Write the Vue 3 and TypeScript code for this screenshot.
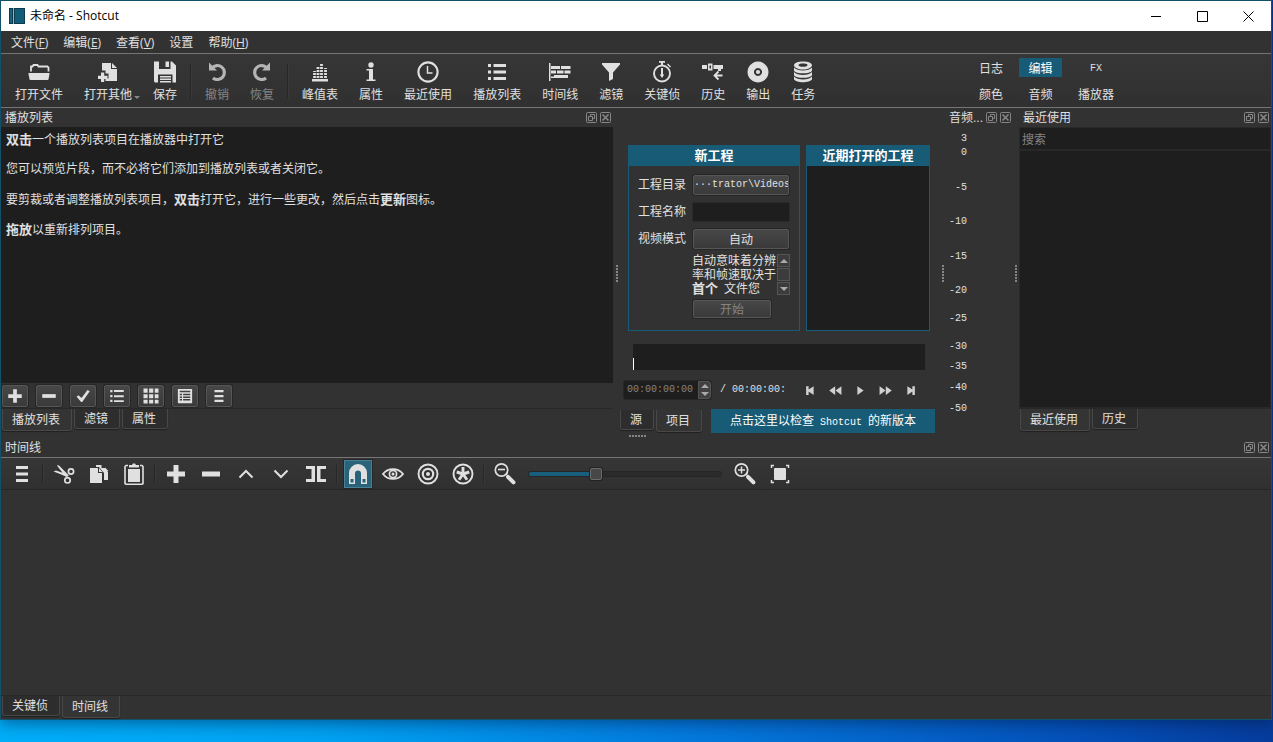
<script setup lang="ts">
import { ref } from 'vue'

interface Tool {
  id: string
  label: string
  disabled?: boolean
  menu?: boolean
  divider?: boolean
}

interface TimelineTool {
  icon: string
  title: string
  active?: boolean
  divider?: boolean
}

const icons: Record<string, string> = {
  open: '<path d="M4 11.500V6.500h1.500l1-1.500h4l1 1.500h9l1 1v4" fill="none" stroke="currentColor" stroke-width="1.800"/><path d="M1.500 13h21v1l-1 5.500-1 .5h-17l-1-.5-1-5.500z"/>',
  other: '<path d="M6 3h9v6h6v12H9.500v-2.500h3v-5h-3v-3H6z"/><path d="M16 3l5 5h-5z"/><path d="M5 12.500h3.200v3.300h3.300V19H8.200v3H5v-3H2v-3.200h3z"/>',
  save: '<path d="M1 1.500h5V9h11.500V1.500H19l4 4v17h-3.500v-8H5v8H2L1 21.500z"/><path d="M12.500 1.500h3.500V7h-3.500zM7 16h11v1.500H7zM7 18.500h11V20H7zM7 21h11v1.500H7z"/>',
  undo: '<path d="M8 18A7 7 0 1 0 7 8" fill="none" stroke="currentColor" stroke-width="3.200"/><path d="M4 2.500v8h8z"/>',
  redo: '<path d="M16 18A7 7 0 1 1 17 8" fill="none" stroke="currentColor" stroke-width="3.200"/><path d="M20 2.500v8h-8z"/>',
  peaks: '<path d="M4 19h16v2.500H4z"/><path d="M6.500 18v-7M10 18V6M13.500 18V3M17.500 18V8" fill="none" stroke="currentColor" stroke-width="2.800" stroke-dasharray="2 1"/>',
  info: '<circle cx="12" cy="5" r="2.700"/><path d="M7.500 9h6.500v10.500h2.500V21h-9v-1.500H10V10.500H7.500z"/>',
  clock: '<circle cx="12" cy="12" r="9.600" fill="none" stroke="currentColor" stroke-width="2.100"/><path d="M11.500 6v7h5" fill="none" stroke="currentColor" stroke-width="1.500"/>',
  list: '<path d="M3 4h3v3H3zM8.500 4H21v3H8.500zM3 10.500h3v3H3zM8.500 10.500H21v3H8.500zM3 17h3v3H3zM8.500 17H21v3H8.500z"/>',
  timeline: '<path d="M1 3h1.500v18H1zM3 6h9v3H3zM13 6h9.500v3H13zM3 10.500h5v3H3zM9 10.500h6.500v3H9zM16.500 10.500h6v3h-6zM6 15h14v3H3v-1.500h3z"/>',
  filter: '<path d="M3 3h18v1.500l-7 8V19l-4 2v-8.500l-7-8z"/>',
  stopwatch: '<circle cx="12" cy="13.500" r="8" fill="none" stroke="currentColor" stroke-width="1.900"/><path d="M9 1h6v1.800H9zM11 2h2v3h-2zM18 3.500l3 3-1 1-3-3zM11 8h2v6l1 1-2 3-2-3 1-1z"/>',
  history: '<path d="M1 5h5v4H1zM7 3.500h4.500v7H7zm1.500 2v3H10v-3zM12.500 5H22v4h-9.500zM17 8.500h3V11h-3z"/><path d="M21.500 15.500H14m3.500-4L13.500 15.500l4 4" fill="none" stroke="currentColor" stroke-width="1.800"/>',
  disc: '<path fill-rule="evenodd" d="M12 1.500a10.500 10.500 0 1 0 .01 0zM12 8a4 4 0 1 1-.01 0z"/><circle cx="12" cy="12" r="2.100"/>',
  jobs: '<path fill-rule="evenodd" d="M12 1.500c5 0 9 1.500 9 3.700S17 9.500 12 9.500 3 7.500 3 5.200s4-3.700 9-3.700zm0 2c-3 0-4.500.6-4.500 1.500S9 6.800 12 6.800 16.500 6 16.500 5 15 3.500 12 3.500z"/><path d="M3 7.500c3 4 15 4 18 0v3.200c-2 3.500-16 3.500-18 0zM3 12c3 4 15 4 18 0v3.200c-2 3.500-16 3.500-18 0zM3 16.500c3 4 15 4 18 0v2.700c-2 4-16 4-18 0z"/>',
  menu: '<path d="M6 4h12v3H6zM6 10.500h12v3H6zM6 17h12v3H6z"/>',
  cut: '<path d="M1.500 9.500L4 8.500l13 4.500-2 2L8 12zM5 3l2 .5 9 9-2 2.500L6 5z"/><circle cx="19" cy="9.500" r="2.600" fill="none" stroke="currentColor" stroke-width="1.700"/><circle cx="15.500" cy="18.300" r="2.700" fill="none" stroke="currentColor" stroke-width="1.700"/>',
  copy: '<path d="M3 6h8v5h4v10H3z"/><path d="M12 6l3.500 4H12zM9 3h5.500v3H18l3 4v8h-4v-7l-5-6H9zM18 5.500l3.500 3.500H18z"/>',
  paste: '<path d="M6 7h12v13H6z"/><path d="M6 3.500H4l-1 1v17l1 .8h16l1-.8v-17l-1-1h-2" fill="none" stroke="currentColor" stroke-width="1.600"/><path d="M7 3h3l1-1.500h2L14 3h3v2.500H7z"/>',
  plus: '<path d="M9.500 3h5v6.500H21v5h-6.500V21h-5v-6.500H3v-5h6.500z"/>',
  minus: '<path d="M3 9.500h18v5H3z"/>',
  up: '<path d="M5.500 15.500L12 9l6.500 6.500" fill="none" stroke="currentColor" stroke-width="2"/>',
  down: '<path d="M5.500 8.500L12 15l6.500-6.500" fill="none" stroke="currentColor" stroke-width="2"/>',
  split: '<path d="M2 4h9v16H2v-3h5.500V7H2zM13 4h9v3h-5.500v10H22v3h-9z"/>',
  magnet: '<path fill-rule="evenodd" d="M3 22V11a9 9 0 0 1 18 0v11h-6V11.500a3 3 0 0 0-6 0V22zm1.500-5v3.500h3V17zm12 0v3.500h3V17z"/>',
  eye: '<path d="M2 12c5-6.500 15-6.500 20 0-5 6.500-15 6.500-20 0z" fill="none" stroke="currentColor" stroke-width="1.900"/><circle cx="12" cy="12" r="3.600" fill="none" stroke="currentColor" stroke-width="1.700"/><circle cx="12" cy="12" r="1.500"/>',
  target: '<circle cx="12" cy="12" r="9.500" fill="none" stroke="currentColor" stroke-width="1.900"/><circle cx="12" cy="12" r="5.200" fill="none" stroke="currentColor" stroke-width="2.200"/><circle cx="12" cy="12" r="2"/>',
  ripple: '<circle cx="12" cy="12" r="9.500" fill="none" stroke="currentColor" stroke-width="1.900"/><path d="M12 12V5M12 12l6.300-2M12 12l4 5.800M12 12l-4 5.800M12 12L5.700 10" stroke="currentColor" stroke-width="2.900"/>',
  zoomout: '<circle cx="8.500" cy="8" r="6.200" fill="none" stroke="currentColor" stroke-width="1.700"/><path d="M5 7.500h7" stroke="currentColor" stroke-width="1.600"/><path d="M12.500 13l2-1.500" stroke="currentColor" stroke-width="1.500"/><path d="M15 14.800l5.500 5.500" stroke="currentColor" stroke-width="4" stroke-linecap="round"/>',
  zoomin: '<circle cx="8.500" cy="8" r="6.200" fill="none" stroke="currentColor" stroke-width="1.700"/><path d="M5 8h7M8.500 4.500v7" stroke="currentColor" stroke-width="1.500"/><path d="M12.500 13l2-1.500" stroke="currentColor" stroke-width="1.500"/><path d="M15 14.800l5.500 5.500" stroke="currentColor" stroke-width="4" stroke-linecap="round"/>',
  fit: '<rect x="6" y="6" width="12" height="12" rx="1"/><path d="M3.500 6V3.500H6M18 3.500h2.500V6M20.500 18v2.500H18M6 20.500H3.500V18" fill="none" stroke="currentColor" stroke-width="1.500"/>',
  check: '<path d="M3.500 13l2.500-2 4 3.500L18 4l3 1.500L11 20H9.500z"/>',
  bullets: '<path d="M3 4h3v3H3zM8 4h13v2.500H8zM3 10.500h3v3H3zM8 11h13v2.500H8zM3 17h3v3H3zM8 17.500h13V20H8z"/>',
  grid: '<path d="M2 2h5.500v5.500H2zM9.500 2H15v5.500H9.500zM17 2h5v5.500h-5zM2 9.500h5.500V15H2zM9.500 9.500H15V15H9.500zM17 9.500h5V15h-5zM2 17h5.500v5H2zM9.500 17H15v5H9.500zM17 17h5v5h-5z"/>',
  details: '<path fill-rule="evenodd" d="M2.500 2.500h19v19h-19zM5 5v2h14V5zM5 9v2h3V9zM9.500 9v2H19V9zM5 12.500v2h3v-2zM9.500 12.500v2H19v-2zM5 16v2h3v-2zM9.500 16v2H19v-2z"/>',
  prev: '<path d="M5 5h4v5.500L17 5v14l-8-5.500V19H5z"/>',
  rewind: '<path d="M11.500 5v14L2 12zM21.500 5v14L12 12z"/>',
  play: '<path d="M7 5l10 7-10 7z"/>',
  forward: '<path d="M2.500 5l9.500 7-9.500 7zM12.500 5l9.500 7-9.500 7z"/>',
  next: '<path d="M19 5h-4v5.500L7 5v14l8-5.500V19h4z"/>',
}

const menus = [
  { text: '文件', key: 'F' },
  { text: '编辑', key: 'E' },
  { text: '查看', key: 'V' },
  { text: '设置', key: '' },
  { text: '帮助', key: 'H' },
]

const tools: Tool[] = [
  { id: 'open', label: '打开文件' },
  { id: 'other', label: '打开其他', menu: true },
  { id: 'save', label: '保存', divider: true },
  { id: 'undo', label: '撤销', disabled: true },
  { id: 'redo', label: '恢复', disabled: true, divider: true },
  { id: 'peaks', label: '峰值表' },
  { id: 'info', label: '属性' },
  { id: 'clock', label: '最近使用' },
  { id: 'list', label: '播放列表' },
  { id: 'timeline', label: '时间线' },
  { id: 'filter', label: '滤镜' },
  { id: 'stopwatch', label: '关键侦' },
  { id: 'history', label: '历史' },
  { id: 'disc', label: '输出' },
  { id: 'jobs', label: '任务' },
]

const layouts = ['日志', '编辑', 'FX', '颜色', '音频', '播放器']
const layout = ref('编辑')

const playlistTools = [
  { icon: 'plus', title: '添加' },
  { icon: 'minus', title: '移除' },
  { icon: 'check', title: '更新' },
  { icon: 'bullets', title: '列表' },
  { icon: 'grid', title: '图标' },
  { icon: 'details', title: '详细' },
  { icon: 'menu', title: '菜单' },
]

const timelineTools: TimelineTool[] = [
  { icon: 'menu', title: '菜单', divider: true },
  { icon: 'cut', title: '剪切' },
  { icon: 'copy', title: '复制' },
  { icon: 'paste', title: '粘贴', divider: true },
  { icon: 'plus', title: '附加' },
  { icon: 'minus', title: '删除' },
  { icon: 'up', title: '提起' },
  { icon: 'down', title: '覆盖' },
  { icon: 'split', title: '分割', divider: true },
  { icon: 'magnet', title: '吸附', active: true },
  { icon: 'eye', title: '拖动预览' },
  { icon: 'target', title: '波纹' },
  { icon: 'ripple', title: '波纹所有轨道', divider: true },
  { icon: 'zoomout', title: '缩小' },
]

const transport = [
  { icon: 'prev', title: '上一个' },
  { icon: 'rewind', title: '快退' },
  { icon: 'play', title: '播放' },
  { icon: 'forward', title: '快进' },
  { icon: 'next', title: '下一个' },
]

/* Each mark takes the distance down to the following one. */
const levels = [
  { db: '3', span: 14 },
  { db: '0', span: 35 },
  { db: '-5', span: 34 },
  { db: '-10', span: 35 },
  { db: '-15', span: 34 },
  { db: '-20', span: 28 },
  { db: '-25', span: 28 },
  { db: '-30', span: 20 },
  { db: '-35', span: 21 },
  { db: '-40', span: 21 },
  { db: '-50', span: 14 },
]

const zoom = ref(34)
const timecode = ref('00:00:00:00')
const projectName = ref('')
const query = ref('')
</script>

<template>
  <div class="desktop">
    <div class="window">
      <header class="titlebar">
        <svg class="logo" viewBox="0 0 16 16" aria-hidden="true">
          <rect width="16" height="16" fill="#0b3a4c" />
          <rect x="1" y="1" width="2" height="14" fill="#176480" />
          <rect x="4" width="1" height="16" fill="#8fb4c0" />
          <rect x="6" y="1" width="9" height="14" fill="#125c78" />
        </svg>
        <h1>未命名 - Shotcut</h1>
        <button class="win" aria-label="最小化"><svg viewBox="0 0 11 11"><path d="M0 5.500h10" /></svg></button>
        <button class="win" aria-label="最大化"><svg viewBox="0 0 11 11"><path d="M.5.5h10v10H.5z" /></svg></button>
        <button class="win" aria-label="关闭"><svg viewBox="0 0 11 11"><path d="M.5.5l10 10M10.500.5l-10 10" /></svg></button>
      </header>

      <nav class="menubar">
        <button v-for="m in menus" :key="m.text">{{ m.text }}<template v-if="m.key">(<u>{{ m.key }}</u>)</template></button>
      </nav>

      <div class="toolbar">
        <template v-for="t in tools" :key="t.id">
          <button class="tool" :disabled="t.disabled">
            <svg class="icon" viewBox="0 0 24 24" v-html="icons[t.id]"></svg>
            <span>{{ t.label }}</span>
            <i v-if="t.menu" class="caret"></i>
          </button>
          <span v-if="t.divider" class="divider"></span>
        </template>
        <div class="layouts">
          <button v-for="l in layouts" :key="l" :class="{ on: l === layout, mono: l === 'FX' }" @click="layout = l">{{ l }}</button>
        </div>
      </div>

      <main class="docks">
        <section class="dock playlist">
          <div class="dock-title">
            <h2>播放列表</h2>
            <button class="dock-btn" aria-label="浮动"><svg viewBox="0 0 11 11"><rect x=".5" y=".5" width="10" height="10" rx="1" /><path d="M4.500 4V2.500h4v4H7M2.500 4.500h4v4h-4z" /></svg></button>
            <button class="dock-btn" aria-label="关闭"><svg viewBox="0 0 11 11"><rect x=".5" y=".5" width="10" height="10" rx="1" /><path d="M2.500 2.500l6 6M8.500 2.500l-6 6" stroke-width="1.600" /></svg></button>
          </div>
          <div class="help">
            <p><b>双击</b>一个播放列表项目在播放器中打开它</p>
            <p>您可以预览片段，而不必将它们添加到播放列表或者关闭它。</p>
            <p>要剪裁或者调整播放列表项目，<b>双击</b>打开它，进行一些更改，然后点击<b>更新</b>图标。</p>
            <p><b>拖放</b>以重新排列项目。</p>
          </div>
          <div class="list-tools">
            <button v-for="p in playlistTools" :key="p.icon" class="raised" :aria-label="p.title">
              <svg class="icon" viewBox="0 0 24 24" v-html="icons[p.icon]"></svg>
            </button>
          </div>
          <div class="tabs">
            <button class="tab on">播放列表</button>
            <button class="tab">滤镜</button>
            <button class="tab">属性</button>
          </div>
        </section>

        <div class="splitter"><i></i></div>

        <section class="player">
          <div class="projects">
            <form class="card new" @submit.prevent>
              <h3>新工程</h3>
              <div class="fields">
                <span>工程目录</span>
                <button type="button" class="raised folder mono">···trator\Videos</button>
                <label for="pname">工程名称</label>
                <input id="pname" v-model="projectName" type="text" />
                <span>视频模式</span>
                <button type="button" class="raised">自动</button>
                <div class="mode">
                  <p>自动意味着分辨率和帧速取决于<b>首个</b><span class="mono">&nbsp;</span>文件您</p>
                  <div class="scroller">
                    <button type="button" aria-label="向上"><i class="tri-up"></i></button>
                    <span></span>
                    <button type="button" aria-label="向下"><i class="tri-down"></i></button>
                  </div>
                </div>
                <button type="submit" class="raised start" disabled>开始</button>
              </div>
            </form>
            <div class="card recent">
              <h3>近期打开的工程</h3>
              <div class="recent-list"></div>
            </div>
          </div>
          <div class="scrub"><i></i></div>
          <div class="transport">
            <div class="timecode">
              <input v-model="timecode" type="text" aria-label="时间码" />
              <div class="spin">
                <button aria-label="增加"><i class="tri-up"></i></button>
                <button aria-label="减少"><i class="tri-down"></i></button>
              </div>
            </div>
            <span class="duration">/ 00:00:00:</span>
            <button v-for="b in transport" :key="b.icon" class="play-btn" :aria-label="b.title">
              <svg class="icon" viewBox="0 0 24 24" v-html="icons[b.icon]"></svg>
            </button>
          </div>
          <div class="source-row">
            <div class="tabs">
              <button class="tab">源</button>
              <button class="tab on">项目</button>
            </div>
            <button class="update">点击这里以检查<span class="mono">&nbsp;Shotcut&nbsp;</span>的新版本</button>
          </div>
          <div class="h-grip"></div>
        </section>

        <div class="splitter"><i></i></div>

        <section class="dock meter">
          <div class="dock-title">
            <h2>音频...</h2>
            <button class="dock-btn" aria-label="浮动"><svg viewBox="0 0 11 11"><rect x=".5" y=".5" width="10" height="10" rx="1" /><path d="M4.500 4V2.500h4v4H7M2.500 4.500h4v4h-4z" /></svg></button>
            <button class="dock-btn" aria-label="关闭"><svg viewBox="0 0 11 11"><rect x=".5" y=".5" width="10" height="10" rx="1" /><path d="M2.500 2.500l6 6M8.500 2.500l-6 6" stroke-width="1.600" /></svg></button>
          </div>
          <ul class="levels">
            <li v-for="l in levels" :key="l.db" :style="{ height: l.span + 'px' }">{{ l.db }}</li>
          </ul>
        </section>

        <div class="splitter"><i></i></div>

        <section class="dock recents">
          <div class="dock-title">
            <h2>最近使用</h2>
            <button class="dock-btn" aria-label="浮动"><svg viewBox="0 0 11 11"><rect x=".5" y=".5" width="10" height="10" rx="1" /><path d="M4.500 4V2.500h4v4H7M2.500 4.500h4v4h-4z" /></svg></button>
            <button class="dock-btn" aria-label="关闭"><svg viewBox="0 0 11 11"><rect x=".5" y=".5" width="10" height="10" rx="1" /><path d="M2.500 2.500l6 6M8.500 2.500l-6 6" stroke-width="1.600" /></svg></button>
          </div>
          <input v-model="query" class="search" type="text" placeholder="搜索" aria-label="搜索" />
          <div class="files"></div>
          <div class="tabs">
            <button class="tab on">最近使用</button>
            <button class="tab">历史</button>
          </div>
        </section>
      </main>

      <section class="dock timeline">
        <div class="dock-title lined">
          <h2>时间线</h2>
          <button class="dock-btn" aria-label="浮动"><svg viewBox="0 0 11 11"><rect x=".5" y=".5" width="10" height="10" rx="1" /><path d="M4.500 4V2.500h4v4H7M2.500 4.500h4v4h-4z" /></svg></button>
          <button class="dock-btn" aria-label="关闭"><svg viewBox="0 0 11 11"><rect x=".5" y=".5" width="10" height="10" rx="1" /><path d="M2.500 2.500l6 6M8.500 2.500l-6 6" stroke-width="1.600" /></svg></button>
        </div>
        <div class="edit-tools">
          <template v-for="t in timelineTools" :key="t.icon">
            <button class="edit" :class="{ on: t.active }" :aria-label="t.title">
              <svg class="icon" viewBox="0 0 24 24" v-html="icons[t.icon]"></svg>
            </button>
            <span v-if="t.divider" class="divider"></span>
          </template>
          <input v-model="zoom" class="zoom" type="range" min="0" max="100" aria-label="缩放" :style="{ '--fill': zoom + '%' }" />
          <button class="edit" aria-label="放大"><svg class="icon" viewBox="0 0 24 24" v-html="icons.zoomin"></svg></button>
          <button class="edit" aria-label="适合窗口"><svg class="icon" viewBox="0 0 24 24" v-html="icons.fit"></svg></button>
        </div>
        <div class="tracks"></div>
        <div class="tabs">
          <button class="tab">关键侦</button>
          <button class="tab on">时间线</button>
        </div>
      </section>
    </div>
  </div>
</template>

<style>
body {
  margin: 0;
}
</style>

<style scoped>
* {
  box-sizing: border-box;
}

.desktop {
  min-height: 100vh;
  display: flex;
  padding: 0 1px 22px 0;
  background: linear-gradient(90deg, #00aef8 0%, #00a2f2 25%, #0478dc 55%, #0450b8 85%, #063c9c 100%);
  font-family: "Liberation Sans", "Noto Sans CJK SC", sans-serif;
  font-size: 12px;
  line-height: 16px;
  color: #e0e0e0;
}

.window {
  flex: 1;
  min-width: 0;
  display: grid;
  grid-template-rows: 30px 23px 54px minmax(330px, 330fr) minmax(120px, 281fr);
  border: 1px solid #13506c;
  background: #323232;
  box-shadow: 0 4px 14px rgba(0, 20, 60, 0.45);
}

button,
input {
  font: inherit;
  color: inherit;
  margin: 0;
  padding: 0;
  border: 0;
  background: none;
  outline: none;
}

h1,
h2,
h3,
p,
ul {
  margin: 0;
  padding: 0;
  font-size: 12px;
  font-weight: 400;
}

b {
  font-size: 13px;
}

.icon {
  display: block;
  width: 24px;
  height: 24px;
  fill: currentColor;
}

.mono {
  font-family: "Liberation Mono", "Noto Sans CJK SC", monospace;
  font-size: 10px;
}

.titlebar {
  display: flex;
  align-items: center;
  background: #fff;
  color: #000;
}

.titlebar h1 {
  flex: 1;
  padding-left: 5px;
  font-family: "Open Sans", "Noto Sans CJK SC", sans-serif;
}

.logo {
  width: 16px;
  height: 16px;
  margin-left: 8px;
}

.win {
  width: 46px;
  height: 30px;
  display: grid;
  place-items: center;
}

.win svg {
  width: 11px;
  height: 11px;
  fill: none;
  stroke: #000;
}

.menubar {
  display: flex;
  align-items: center;
  gap: 15px;
  padding: 2px 0 0 10px;
  border-bottom: 1px solid #757575;
  font-family: "Open Sans", "Noto Sans CJK SC", sans-serif;
}

.toolbar {
  display: flex;
  align-items: center;
  gap: 1px;
  padding-left: 4px;
  border-bottom: 1px solid #757575;
  background: linear-gradient(#363636, #303030);
}

.tool {
  position: relative;
  padding: 1px 10px 0;
  display: flex;
  flex-direction: column;
  align-items: center;
  gap: 3px;
}

.tool:disabled span {
  color: #858585;
}

.tool:disabled .icon {
  color: #b5b5b5;
}

.caret {
  position: absolute;
  right: 2px;
  bottom: 4px;
  border: 3px solid transparent;
  border-top-color: #888;
  border-bottom: 0;
}

.divider {
  width: 6px;
  height: 34px;
  background: linear-gradient(90deg, transparent 2px, #262626 2px, #262626 3px, #3a3a3a 3px, #3a3a3a 4px, transparent 4px);
}

.layouts {
  margin-left: auto;
  margin-right: 148px;
  display: grid;
  grid-template-columns: 42px 43px 54px;
  grid-auto-rows: 19px;
  gap: 7px;
}

.layouts button,
.raised,
.update {
  padding-top: 2px;
}

.layouts .on {
  background: #175b76;
  color: #fff;
}

.docks {
  display: grid;
  grid-template-columns: minmax(0, 1fr) 7px 319px 8px 66px 6px 252px;
}

.dock {
  min-width: 0;
  display: flex;
  flex-direction: column;
}

.dock-title {
  height: 19px;
  flex: none;
  display: flex;
  align-items: center;
  gap: 3px;
  padding: 0 2px 0 4px;
}

.dock-title h2 {
  flex: 1;
  white-space: nowrap;
}

.lined {
  height: 20px;
  border-bottom: 1px solid #757575;
}

.dock-btn {
  width: 11px;
  height: 11px;
}

.dock-btn svg {
  display: block;
  fill: none;
  stroke: #878787;
}

.help {
  flex: 1;
  padding: 5px;
  background: #1e1e1e;
}

.help p {
  height: 15px;
  line-height: 15px;
  margin-bottom: 15px;
}

.list-tools {
  display: flex;
  gap: 8px;
  padding: 2px 1px 1px;
}

.raised {
  height: 20px;
  border: 1px solid #565656;
  border-radius: 2px;
  background: linear-gradient(#474747, #3a3a3a);
  box-shadow: 0 0 0 1px #262626;
}

.raised:disabled {
  color: #858585;
}

.list-tools .raised {
  width: 26px;
  height: 22px;
  padding: 0;
  display: grid;
  place-items: center;
}

.list-tools .icon {
  width: 18px;
  height: 18px;
}

.tabs {
  display: flex;
  align-items: flex-start;
  gap: 2px;
  height: 30px;
  flex: none;
  padding-left: 1px;
  border-top: 1px solid #282828;
}

.tab {
  height: 20px;
  padding: 1px 11px 0 9px;
  border: 1px solid #484848;
  border-top: 0;
  border-radius: 0 0 3px 3px;
  background: #2d2d2d;
  box-shadow: 0 1px 1px #202020;
  white-space: nowrap;
}

.tab.on {
  height: 22px;
  background: #343434;
}

.splitter {
  display: grid;
  place-items: center;
}

.splitter i {
  width: 2px;
  height: 17px;
  background: repeating-linear-gradient(#858585 0 2px, transparent 2px 3px);
}

.player {
  min-width: 0;
  display: flex;
  flex-direction: column;
  padding-top: 37px;
}

.projects {
  display: grid;
  grid-template-columns: 172px 124px;
  gap: 6px;
  padding: 0 8px;
  flex: 1;
}

.card {
  display: flex;
  flex-direction: column;
  border: 1px solid #175b76;
}

.card h3 {
  height: 20px;
  line-height: 20px;
  background: #175b76;
  color: #fff;
  font-size: 13px;
  font-weight: 700;
  text-align: center;
}

.fields {
  display: grid;
  grid-template-columns: 48px 97px;
  grid-template-rows: repeat(3, 20px) 37px 18px;
  gap: 7px 6px;
  align-items: center;
  padding: 9px;
}

.fields .raised {
  margin-left: 1px;
}

.fields .folder {
  padding: 0;
  overflow: hidden;
  white-space: nowrap;
}

.fields input {
  width: 98px;
  height: 20px;
  padding: 0 4px;
  border: 1px solid #292929;
  border-radius: 2px;
  background: #1e1e1e;
}

.mode {
  grid-column: 2;
  width: 98px;
  height: 41px;
  display: flex;
  justify-content: space-between;
  overflow: hidden;
}

.mode p {
  width: 85px;
  line-height: 14px;
}

.scroller {
  width: 13px;
  display: grid;
  grid-template-rows: 13px 1fr 13px;
  gap: 1px;
}

.scroller > * {
  display: grid;
  place-items: center;
  border: 1px solid #555;
  background: #3c3c3c;
}

.tri-up,
.tri-down {
  width: 0;
  height: 0;
  border: 4px solid transparent;
}

.tri-up {
  border-top: 0;
  border-bottom-color: #aaa;
}

.tri-down {
  border-bottom: 0;
  border-top-color: #aaa;
}

.fields .start {
  grid-column: 2;
  width: 78px;
  height: 18px;
  line-height: 14px;
}

.recent-list {
  flex: 1;
  background: #1e1e1e;
}

.scrub {
  height: 26px;
  margin: 13px 14px 10px 13px;
  display: flex;
  align-items: flex-end;
  background: #1e1e1e;
}

.scrub i {
  width: 1px;
  height: 12px;
  background: #fff;
}

.transport {
  height: 20px;
  margin: 0 0 9px 3px;
  display: flex;
  align-items: center;
  font-family: "Liberation Mono", monospace;
  font-size: 10px;
}

.timecode {
  display: flex;
  width: 89px;
  height: 20px;
  border: 1px solid #262626;
  border-radius: 3px;
  background: #1e1e1e;
  color: #858585;
}

.timecode input {
  flex: 1;
  min-width: 0;
  padding-left: 3px;
}

.spin {
  width: 13px;
  display: grid;
  grid-template-rows: 1fr 1fr;
  border: 1px solid #555;
  border-radius: 0 3px 3px 0;
  background: #414141;
}

.spin button {
  display: grid;
  place-items: center;
}

.duration {
  width: 86px;
  padding-left: 8px;
  white-space: nowrap;
}

.play-btn {
  width: 25px;
  height: 20px;
  display: grid;
  place-items: center;
  color: #d0d0d0;
}

.play-btn .icon {
  width: 15px;
  height: 15px;
}

.source-row {
  display: flex;
  justify-content: space-between;
  padding-right: 4px;
}

.source-row .tabs {
  height: 24px;
  padding-left: 0;
  border-top-color: transparent;
}

.update {
  width: 224px;
  height: 24px;
  background: #175b76;
  color: #fff;
  white-space: nowrap;
}

.h-grip {
  width: 17px;
  height: 2px;
  margin: 2px 0 1px 9px;
  background: repeating-linear-gradient(90deg, #858585 0 2px, transparent 2px 3px);
}

.meter .dock-title {
  padding: 0 2px 0 2px;
}

.levels {
  width: 20px;
  padding-top: 5px;
  list-style: none;
  font-family: "Liberation Mono", monospace;
  font-size: 10px;
  line-height: 14px;
  text-align: right;
}

.search {
  height: 23px;
  padding: 2px 2px 0;
  border: 1px solid #292929;
  border-radius: 2px;
  background: #1e1e1e;
}

.search::placeholder {
  color: #858585;
  opacity: 1;
}

.files {
  flex: 1;
  border: 1px solid #282828;
  background: #1e1e1e;
}

.edit-tools {
  height: 32px;
  flex: none;
  display: flex;
  align-items: center;
  gap: 1px;
  padding-left: 4px;
  border-bottom: 1px solid #262626;
  background: linear-gradient(#363636, #303030);
}

.edit-tools .divider {
  height: 18px;
}

.edit {
  width: 28px;
  height: 28px;
  margin: 0 3px;
  padding: 0;
  display: grid;
  place-items: center;
}

.edit.on {
  border: 1px solid #4a7f94;
  background: #28637a;
  box-shadow: 0 0 0 1px #262626;
}

.zoom {
  appearance: none;
  width: 192px;
  height: 14px;
  margin: 0 6px;
}

.zoom::-webkit-slider-runnable-track {
  height: 4px;
  border-radius: 2px;
  background: linear-gradient(90deg, #175f7c var(--fill), #2a2a2a var(--fill));
  box-shadow: 0 0 0 1px #262626;
}

.zoom::-webkit-slider-thumb {
  appearance: none;
  width: 12px;
  height: 12px;
  margin-top: -4px;
  border: 1px solid #6a6a6a;
  border-radius: 2px;
  background: #474747;
  box-shadow: 0 0 0 1px #222;
}

.tracks {
  flex: 1;
}

.timeline .tabs {
  height: 24px;
}
</style>
